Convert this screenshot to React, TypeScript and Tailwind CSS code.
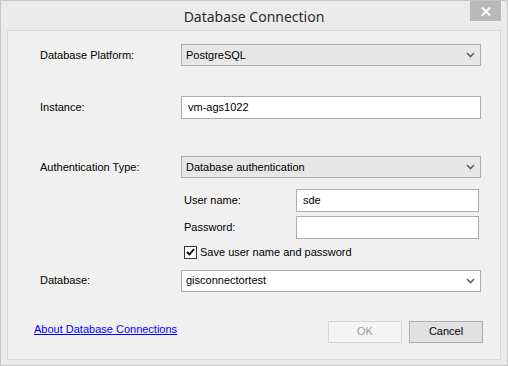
import React from "react";

const FONT = "font-['Liberation_Sans',Arial,sans-serif]";

const Chevron = () => (
  <svg width="9" height="6" viewBox="0 0 9 6" className="shrink-0">
    <path d="M1 1 L4.5 4.5 L8 1" fill="none" stroke="#606060" strokeWidth="1.6" />
  </svg>
);

const Select = ({ value, white = false }: { value: string; white?: boolean }) => (
  <div
    className={`flex h-[22px] w-[300px] items-center justify-between border border-[#acacac] pl-[4px] pr-[5px] ${
      white ? "bg-white" : "bg-[#e7e7e7]"
    }`}
  >
    <span>{value}</span>
    <Chevron />
  </div>
);

const Input = ({ value, width = "w-[300px]" }: { value?: string; width?: string }) => (
  <div className={`flex h-[23px] ${width} items-center border border-[#abadb3] bg-white pl-[6px]`}>
    {value}
  </div>
);

const Row = ({ label, children, className = "" }: { label: string; children: React.ReactNode; className?: string }) => (
  <div className={`flex items-center ${className}`}>
    <span className="w-[141px] shrink-0">{label}</span>
    {children}
  </div>
);

export default function App() {
  return (
    <div className={`relative flex h-[366px] w-[508px] flex-col border border-[#c6c6c6] bg-[#ebebeb] ${FONT}`}>
      {/* Title bar */}
      <div className="flex h-[29px] items-center justify-center pt-[2px]">
        <span className="font-['Noto_Sans',sans-serif] text-[14px] text-[#2b2b2b]">Database Connection</span>
      </div>
      <button className="absolute right-[6px] top-0 flex h-[20px] w-[31px] items-center justify-center bg-[#b9b9b9]">
        <svg width="10" height="9" viewBox="0 0 10 9">
          <path d="M1 0.5 L9 8.5 M9 0.5 L1 8.5" stroke="#fff" strokeWidth="2" />
        </svg>
      </button>

      {/* Content panel */}
      <div className="mx-[6px] flex h-[330px] flex-col border border-[#d9d9d9] bg-[#f0f0f0] pl-[32px] text-[11px] text-black">
        <Row label="Database Platform:" className="mt-[13px]">
          <Select value="PostgreSQL" />
        </Row>
        <Row label="Instance:" className="mt-[30px]">
          <Input value="vm-ags1022" />
        </Row>
        <Row label="Authentication Type:" className="mt-[37px]">
          <Select value="Database authentication" />
        </Row>

        <div className="ml-[144px] flex flex-col">
          <div className="mt-[11px] flex items-center">
            <span className="w-[112px]">User name:</span>
            <Input value="sde" width="w-[183px]" />
          </div>
          <div className="mt-[4px] flex items-center">
            <span className="w-[112px]">Password:</span>
            <Input width="w-[183px]" />
          </div>
          <label className="mt-[5px] flex items-center gap-[3px]">
            <span className="flex h-[13px] w-[13px] items-center justify-center border border-[#333] bg-white">
              <svg width="9" height="8" viewBox="0 0 9 8">
                <path d="M1 4 L3.5 6.5 L8 1" fill="none" stroke="#000" strokeWidth="1.8" />
              </svg>
            </span>
            <span>Save user name and password</span>
          </label>
        </div>

        <Row label="Database:" className="mt-[9px]">
          <Select value="gisconnectortest" white />
        </Row>

        <div className="mt-[29px] flex items-center pr-[17px]">
          <a href="#" className="ml-[-6px] -mt-[5px] text-[#0000ff] underline">
            About Database Connections
          </a>
          <div className="ml-auto flex gap-[7px]">
            <button className="h-[22px] w-[74px] border border-[#d5d5d5] bg-[#f4f4f4] text-[#a0a0a0]">OK</button>
            <button className="h-[22px] w-[74px] border border-[#adadad] bg-[#e1e1e1] text-black">Cancel</button>
          </div>
        </div>
      </div>
    </div>
  );
}
